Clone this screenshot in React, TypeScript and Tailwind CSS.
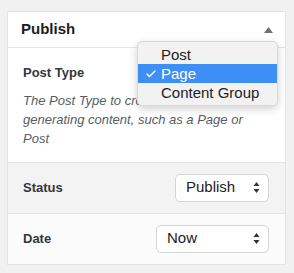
import { Check } from 'lucide-react';

function SelectArrows() {
  return (
    <svg width="7" height="13" viewBox="0 0 7 13" className="text-[#333]">
      <path d="M3.5 1 L6.5 5 L0.5 5 Z" fill="currentColor" />
      <path d="M3.5 12 L6.5 8 L0.5 8 Z" fill="currentColor" />
    </svg>
  );
}

function FakeSelect({ value, width }: { value: string; width: string }) {
  return (
    <div
      className={`flex h-[28px] ${width} items-center justify-between rounded-[5px] border border-[#d4d4d4] bg-white pl-[10px] pr-[8px] text-[15px] text-[#222]`}
    >
      <span>{value}</span>
      <SelectArrows />
    </div>
  );
}

export default function App() {
  const options = ['Post', 'Page', 'Content Group'];
  const selected = 'Page';

  return (
    <div className="h-[273px] w-[294px] bg-[#f1f1f1] pl-[7px] pr-[8px] pt-[11px] font-['Liberation_Sans',Arial,sans-serif]">
      <div className="relative border border-[#e2e4e7] bg-white">
        <div className="flex h-[36px] items-center justify-between border-b border-[#e2e4e7] pl-[13px] pr-[12px]">
          <h2 className="text-[15px] font-bold text-[#191e23]">Publish</h2>
          <svg width="9" height="6" viewBox="0 0 9 6">
            <path d="M4.5 0 L9 6 L0 6 Z" fill="#6c7176" />
          </svg>
        </div>

        <div className="border-b border-[#e2e4e7] px-[15px] pb-[14px] pt-[15px]">
          <div className="text-[13px] font-bold text-[#32373c]">Post Type</div>
          <p className="mt-[8px] text-[13px] leading-[19px] italic text-[#555d66]">
            The Post Type to create when
            <br />
            generating content, such as a Page or Post
          </p>
        </div>

        <div className="flex h-[51px] items-center justify-between border-b border-[#e2e4e7] bg-[#f3f3f3] pl-[15px] pr-[16px]">
          <span className="text-[13px] font-bold text-[#32373c]">Status</span>
          <FakeSelect value="Publish" width="w-[94px]" />
        </div>

        <div className="flex h-[50px] items-center justify-between bg-[#fbfbfb] pl-[15px] pr-[16px]">
          <span className="text-[13px] font-bold text-[#32373c]">Date</span>
          <FakeSelect value="Now" width="w-[113px]" />
        </div>

        <ul className="absolute left-[129px] top-[29px] w-[141px] rounded-[5px] border border-[#d8d8d8] bg-[#f2f2f2] py-[3px] text-[15px] leading-[19px] text-[#222] shadow-[0_3px_8px_rgba(0,0,0,0.18)]">
          {options.map((option) => (
            <li
              key={option}
              className={`flex items-center pl-[23px] ${option === selected ? 'bg-[#3d8ef5] text-white' : ''}`}
            >
              <span className="relative">
                {option === selected ? (
                  <Check size={12} strokeWidth={3} className="absolute -left-[16px] top-[4px]" />
                ) : null}
                {option}
              </span>
            </li>
          ))}
        </ul>
      </div>
    </div>
  );
}
